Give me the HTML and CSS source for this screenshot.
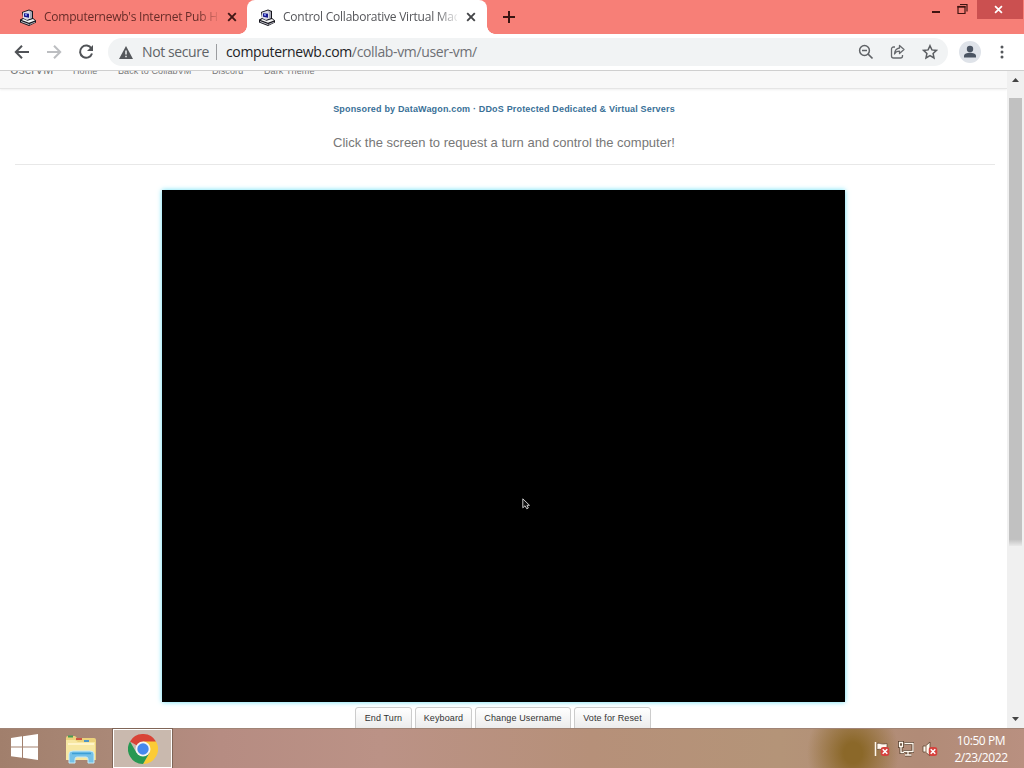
FILE: index.html
```html
<!DOCTYPE html>
<html lang="en">
<head>
<meta charset="utf-8">
<title>Control Collaborative Virtual Machines</title>
<link rel="stylesheet" href="styles.css">
</head>
<body>
<svg class="defs" width="0" height="0" aria-hidden="true">
  <symbol id="pc" viewBox="0 0 16 17">
    <path d="M2 3 9 .5l4 1.500v7l3 2.500v2L9 17l-9-3.500v-3L3 9z" fill="#14141c"/>
    <path d="M3 3.500L9 1.500l3 1.500v6l-5 2-4-2z" fill="#dcdce6"/>
    <path d="M9 1.500l3 1.500v6l-2 .8V4z" fill="#a8a8b6"/>
    <path d="M4 4.200l5 .6v4L4 7.800z" fill="#17178c"/>
    <path d="M5 5l2 .3v1.500L5 6.500z" fill="#8aa0ff"/>
    <path d="M1.500 11l2-1 4 1.800L13 10l2 1.500-6 2.300z" fill="#f4f4f4"/>
    <path d="M1 12l8 3v1l-8-3zM9.500 15l5.500-2.200v.8L9.500 16z" fill="#c4c4cd"/>
  </symbol>
  <symbol id="cross" viewBox="0 0 10 10"><path d="M1.200 1.200l7.600 7.600M8.800 1.200l-7.600 7.600" fill="none" stroke="currentColor" stroke-width="1.900"/></symbol>
  <symbol id="badge" viewBox="0 0 9 9"><rect width="9" height="9" rx="3" fill="#d5423d"/><path d="M2.200 2.200l4.600 4.600M6.800 2.200L2.200 6.800" stroke="#fff" stroke-width="1.500"/></symbol>
</svg>
<div class="desktop">
  <header class="tabstrip">
    <div class="tab">
      <svg class="favicon"><use href="#pc"/></svg>
      <span class="tab-title">Computernewb's Internet Pub Hub</span>
      <svg class="tab-close"><use href="#cross"/></svg>
    </div>
    <div class="tab active">
      <svg class="favicon"><use href="#pc"/></svg>
      <span class="tab-title">Control Collaborative Virtual Machines</span>
      <svg class="tab-close"><use href="#cross"/></svg>
    </div>
    <svg class="new-tab" viewBox="0 0 12 12"><path d="M6 0v12M0 6h12" stroke="#3a1512" stroke-width="2"/></svg>
    <div class="window-controls">
      <svg width="9" height="20" viewBox="0 0 9 20"><path d="M0 12h8" stroke="#401411" stroke-width="2"/></svg>
      <svg width="11" height="20" viewBox="0 0 11 20"><path d="M1 6.500h7v7H1zM3 4.500h7v7" fill="none" stroke="#401411" stroke-width="1.200"/><path d="M.4 6.800h8" stroke="#401411" stroke-width="1.800"/></svg>
      <div class="window-close"><svg width="9" height="9"><use href="#cross"/></svg></div>
    </div>
  </header>
  <div class="toolbar">
    <div class="nav-icons">
      <svg width="16" height="16" viewBox="0 0 16 16"><path d="M15 8H2M8 1.800L1.800 8 8 14.200" fill="none" stroke="#505357" stroke-width="2"/></svg>
      <svg width="16" height="16" viewBox="0 0 16 16"><path d="M1 8h13M8 1.800L14.200 8 8 14.200" fill="none" stroke="#bcbec1" stroke-width="2"/></svg>
      <svg width="16" height="16" viewBox="0 0 16 16"><path d="M13.400 4.500A6.100 6.100 0 1 0 14 9.500" fill="none" stroke="#505357" stroke-width="2"/><path d="M15 1v6H9z" fill="#505357"/></svg>
    </div>
    <div class="omnibox">
      <svg width="14" height="13" viewBox="0 0 14 13"><path d="M7 0l7 13H0z" fill="#55585c"/><path d="M7 4.500v4M7 9.700v1.600" stroke="#f1f3f4" stroke-width="1.500"/></svg>
      <span class="security">Not secure</span>
      <i class="divider"></i>
      <span class="url"><b>computernewb.com</b>/collab-vm/user-vm/</span>
      <div class="omni-actions">
        <svg width="16" height="16" viewBox="0 0 16 16"><circle cx="6.500" cy="6.500" r="4.900" fill="none" stroke="#606367" stroke-width="1.500"/><path d="M4 6.500h5M10 10l4.500 4.500" stroke="#606367" stroke-width="1.700"/></svg>
        <svg width="16" height="16" viewBox="0 0 16 16"><path d="M5 3H3.500A2 2 0 0 0 1.500 5v7a2 2 0 0 0 2 2h7a2 2 0 0 0 2-2v-1M9.500 1.500L14 5.500l-4.500 4V7.200C7 7.200 5.500 8.200 4.500 10c.3-3.500 2-5.600 5-6z" fill="none" stroke="#66696d" stroke-width="1.300" stroke-linejoin="round"/></svg>
        <svg width="16" height="16" viewBox="0 0 16 16"><path d="M8 1.700l1.900 4.200 4.600.5-3.400 3.100.9 4.500L8 11.700 4 14l.9-4.500L1.500 6.400l4.600-.5z" fill="none" stroke="#5b5e62" stroke-width="1.500"/></svg>
      </div>
    </div>
    <svg class="profile" viewBox="0 0 22 22"><circle cx="11" cy="11" r="11" fill="#dfe3e9"/><circle cx="11" cy="8" r="3.200" fill="#4b5563"/><path d="M5 16.500V15c0-2 3-3.200 6-3.200s6 1.200 6 3.200v1.500z" fill="#4b5563"/></svg>
    <svg class="more" viewBox="0 0 4 14"><circle cx="2" cy="2" r="1.500"/><circle cx="2" cy="7" r="1.500"/><circle cx="2" cy="12" r="1.500"/></svg>
  </div>
  <div class="viewport">
    <main class="page">
      <nav class="navbar"><span class="brand">UserVM</span><span class="n-home">Home</span><span class="n-back">Back to CollabVM</span><span class="n-discord">Discord</span><span class="n-dark">Dark Theme</span></nav>
      <section class="intro">
        <a class="sponsor">Sponsored by DataWagon.com · DDoS Protected Dedicated &amp; Virtual Servers</a>
        <p class="hint">Click the screen to request a turn and control the computer!</p>
      </section>
      <div class="vm-screen">
        <svg class="pointer" viewBox="0 0 8 12"><path d="M.8.800v9l2.200-2 1.800 3 1.500-.8L5 7.300h2.500z" fill="#111" stroke="#ddd" stroke-width=".9"/></svg>
      </div>
      <div class="actions">
        <button class="b-end">End Turn</button><button class="b-key">Keyboard</button><button class="b-name">Change Username</button><button class="b-vote">Vote for Reset</button>
      </div>
    </main>
    <div class="scrollbar">
      <svg class="arrow" viewBox="0 0 7 4"><path d="M0 4l3.500-4L7 4z"/></svg>
      <div class="thumb"></div>
      <svg class="arrow down" viewBox="0 0 7 4"><path d="M0 0l3.500 4L7 0z"/></svg>
    </div>
  </div>
  <footer class="taskbar">
    <svg class="start" viewBox="0 0 27 26"><path d="M0 4l11-1.700v10.200H0zM12 2.200L27 0v12.500H12zM0 13.500h11v10.200L0 22.200zM12 13.500h15V26l-15-2.200z" fill="#fff"/></svg>
    <svg class="explorer" viewBox="0 0 32 29">
      <path d="M1 3q0-2 2-2h7l2 2h17q2 0 2 2v20H1z" fill="#ecd27c"/>
      <path d="M3 1.500h5" stroke="#469a54" stroke-width="2"/><path d="M11 4h6" stroke="#ce5541" stroke-width="2"/><path d="M19 6h5" stroke="#4d95c5" stroke-width="2"/>
      <path d="M1 5h9l3 2h17v18H1z" fill="#f7e7a2"/><path d="M3 9h26" stroke="#fff4c8" stroke-width="2"/>
      <path d="M4 28v-9q0-3 4-3h17q4 0 4 3v9h-6v-4q0-2-2-2h-9q-2 0-2 2v4z" fill="#74c1e8" stroke="#c6ebf8"/>
      <path d="M7 18.500h19" stroke="#3b9fd6" stroke-width="1.500"/>
    </svg>
    <div class="task-active">
      <svg width="30" height="30" viewBox="0 0 30 30">
        <path d="M15 15L2 7.500A15 15 0 0 1 28 7.500z" fill="#d94436"/>
        <path d="M15 15V7.500h13A15 15 0 0 1 15 30l6.500-11.300z" fill="#fbcb36"/>
        <path d="M15 15l6.500 3.800L15 30A15 15 0 0 1 2 7.500l6.500 11.300z" fill="#279852"/>
        <circle cx="15" cy="15" r="7.500" fill="#f7f5f1"/><circle cx="15" cy="15" r="5.700" fill="#4688ed"/>
      </svg>
    </div>
    <div class="tray">
      <svg width="16" height="16" viewBox="0 0 16 16"><path d="M1.500 1v14M3 2.500c3-1 4 1.500 10 0v6c-5 1.500-6-1-10 0z" fill="#fff8ee" stroke="#5d4430" stroke-width=".7"/><path d="M1.500 1v14" stroke="#fff8ee" stroke-width="1.500"/><use href="#badge" x="6.500" y="6" width="9" height="9"/></svg>
      <svg width="16" height="16" viewBox="0 0 16 16"><path d="M6.500 2.500H15v8H5.500M10 11v3M7 14h6.500M3 6v5.500h3M1.500 1.500h3v4h-3z" fill="none" stroke="#59412e" stroke-width="3"/><path d="M6.500 2.500H15v8H5.500M10 11v3M7 14h6.500M3 6v5.500h3M1.500 1.500h3v4h-3z" fill="none" stroke="#fff8ee" stroke-width="1.300"/></svg>
      <svg width="16" height="16" viewBox="0 0 16 16"><path d="M1 5h2.500L8 1v14l-4.500-4H1z" fill="#fff8ee" stroke="#5d4430" stroke-width=".8"/><path d="M4 5v6" stroke="#8b6f59"/><use href="#badge" x="6.500" y="6" width="9" height="9"/></svg>
    </div>
    <div class="clock"><span>10:50 PM</span><span class="date">2/23/2022</span></div>
  </footer>
</div>
</body>
</html>
```

FILE: styles.css
```css
* { box-sizing: border-box; }
body { margin: 0; font-family: "Open Sans", "Noto Sans", sans-serif; }
svg { display: block; flex: none; }
.defs { position: absolute; }
.desktop { width: 1024px; height: 768px; display: flex; flex-direction: column; overflow: hidden; background: #fff; }

.tabstrip { height: 34px; flex: none; display: flex; background: #f77f77; }
.tab { width: 247px; display: flex; align-items: center; padding: 0 10px 0 20px; color: #672c28; }
.tab.active { width: 240px; padding: 0 11px 0 12px; background: #fff; color: #55565a; border-radius: 8px 8px 0 0; position: relative; }
.tab.active::before, .tab.active::after { content: ""; position: absolute; bottom: 0; width: 8px; height: 8px; }
.tab.active::before { left: -8px; background: radial-gradient(circle at 0 0, #f77f77 7.5px, #fff 8px); }
.tab.active::after { right: -8px; background: radial-gradient(circle at 100% 0, #f77f77 7.5px, #fff 8px); }
.favicon { width: 16px; height: 17px; }
.tab-title { width: 174px; margin-left: 8px; font-size: 12px; line-height: 18px; letter-spacing: -.24px; white-space: nowrap; overflow: hidden; -webkit-mask-image: linear-gradient(90deg, #000 88%, #0002); mask-image: linear-gradient(90deg, #000 88%, #0002); }
.tab-close { width: 10px; height: 10px; margin-left: auto; color: #401816; }
.active .tab-close { color: #434447; }
.new-tab { width: 12px; height: 12px; margin: 11px 0 0 16px; }
.window-controls { display: flex; margin-left: auto; gap: 16px; align-items: flex-start; }
.window-close { width: 46px; height: 19px; margin: 0 1px 0 -7px; padding-right: 3px; background: #cb5050; color: #fff; display: flex; align-items: center; justify-content: center; }

.toolbar { height: 37px; flex: none; display: flex; align-items: center; border-bottom: 1px solid #cfcfcf; padding: 0 20px 0 14px; background: #fff; }
.nav-icons { display: flex; gap: 16px; width: 94px; }
.omnibox { width: 840px; height: 28px; border-radius: 14px; background: #f1f3f4; display: flex; align-items: center; padding: 0 10px 0 11px; font-size: 14px; line-height: 20px; }
.security { color: #606367; width: 67px; margin-left: 9px; letter-spacing: -.4px; white-space: nowrap; }
.divider { width: 1px; height: 16px; background: #9b9da0; margin: 0 9px 0 7px; }
.url { color: #6e7074; letter-spacing: -.35px; white-space: nowrap; }
.url b { font-weight: 400; color: #222326; }
.omni-actions { display: flex; gap: 16px; margin-left: auto; }
.profile { width: 22px; height: 22px; margin-left: 11px; }
.more { width: 4px; height: 14px; margin-left: auto; fill: #55585c; }

.viewport { flex: 1; min-height: 0; display: flex; }
.page { flex: 1; min-width: 0; overflow: hidden; font-family: "Liberation Sans", Arial, sans-serif; }
.navbar { height: 18px; display: flex; align-items: flex-end; padding: 0 0 11px 10px; background: #f8f8f8; border-bottom: 1px solid #e5e5e5; box-shadow: 0 1px 2px #0001; color: #777; font-size: 9px; line-height: 12px; white-space: nowrap; letter-spacing: .12px; }
.brand { width: 63px; font-size: 12px; line-height: 13px; letter-spacing: 0; }
.n-home { width: 45px; }
.n-back { width: 94px; }
.n-discord { width: 52px; }
.intro { height: 76px; margin: 0 12px 0 15px; padding-right: 2px; border-bottom: 1px solid #e8e8e8; display: flex; flex-direction: column; align-items: center; white-space: nowrap; }
.sponsor { margin-top: 14px; font-size: 9px; line-height: 12px; font-weight: 700; color: #397097; letter-spacing: .17px; }
.hint { margin: 19px 0 0; font-size: 13px; line-height: 18px; color: #777; }
.vm-screen { width: 683px; height: 512px; margin: 25px 0 0 162px; background: #000; box-shadow: 0 0 5px #66dff5; position: relative; }
.pointer { position: absolute; left: 360px; top: 308px; width: 8px; height: 12px; }
.actions { display: flex; gap: 3px; margin: 5px 0 0 355px; }
.actions button { height: 30px; padding: 0 0 9px; font: 9px "Liberation Sans", Arial, sans-serif; color: #333; border: 1px solid #ccc; border-radius: 3px; background: linear-gradient(#fff, #e4e4e4); white-space: nowrap; letter-spacing: .12px; }
.actions .b-end { width: 57px; }
.actions .b-key { width: 57px; }
.actions .b-name { width: 96px; }
.actions .b-vote { width: 77px; }
.scrollbar { width: 17px; background: #f0f0f0; display: flex; flex-direction: column; align-items: center; }
.arrow { width: 7px; height: 4px; margin-top: 7px; fill: #444; }
.thumb { width: 13px; height: 448px; margin-top: 16px; background: linear-gradient(#c1c1c1 98.5%, #e9e9e9); }
.down { margin: auto 0 7px; }

.taskbar { height: 40px; flex: none; display: flex; border-top: 1px solid #a08476; background: radial-gradient(ellipse 46px 52px at 853px 24px, #8b6829 20%, #8b682900 100%), linear-gradient(90deg, #a17f6c 0, #aa8877 110px, #b68c82 220px, #bb9286 380px, #b69079 590px, #b49478 780px, #b18b77 920px, #b99080 1024px); }
.start { width: 27px; height: 26px; margin: 5px 0 0 11px; }
.explorer { width: 32px; height: 29px; margin: 6px 0 0 27px; }
.task-active { width: 59px; height: 39px; margin-left: 16px; border: 1px solid #fff; background: #c9b9ae; display: flex; align-items: center; justify-content: center; box-shadow: 0 0 0 1px #806557; }
.tray { display: flex; gap: 8px; margin: 12px 0 0 auto; }
.clock { width: 86px; display: flex; flex-direction: column; align-items: center; padding: 3px 0 0; color: #fff; font-size: 12px; line-height: 17px; letter-spacing: -.4px; white-space: nowrap; }
```
